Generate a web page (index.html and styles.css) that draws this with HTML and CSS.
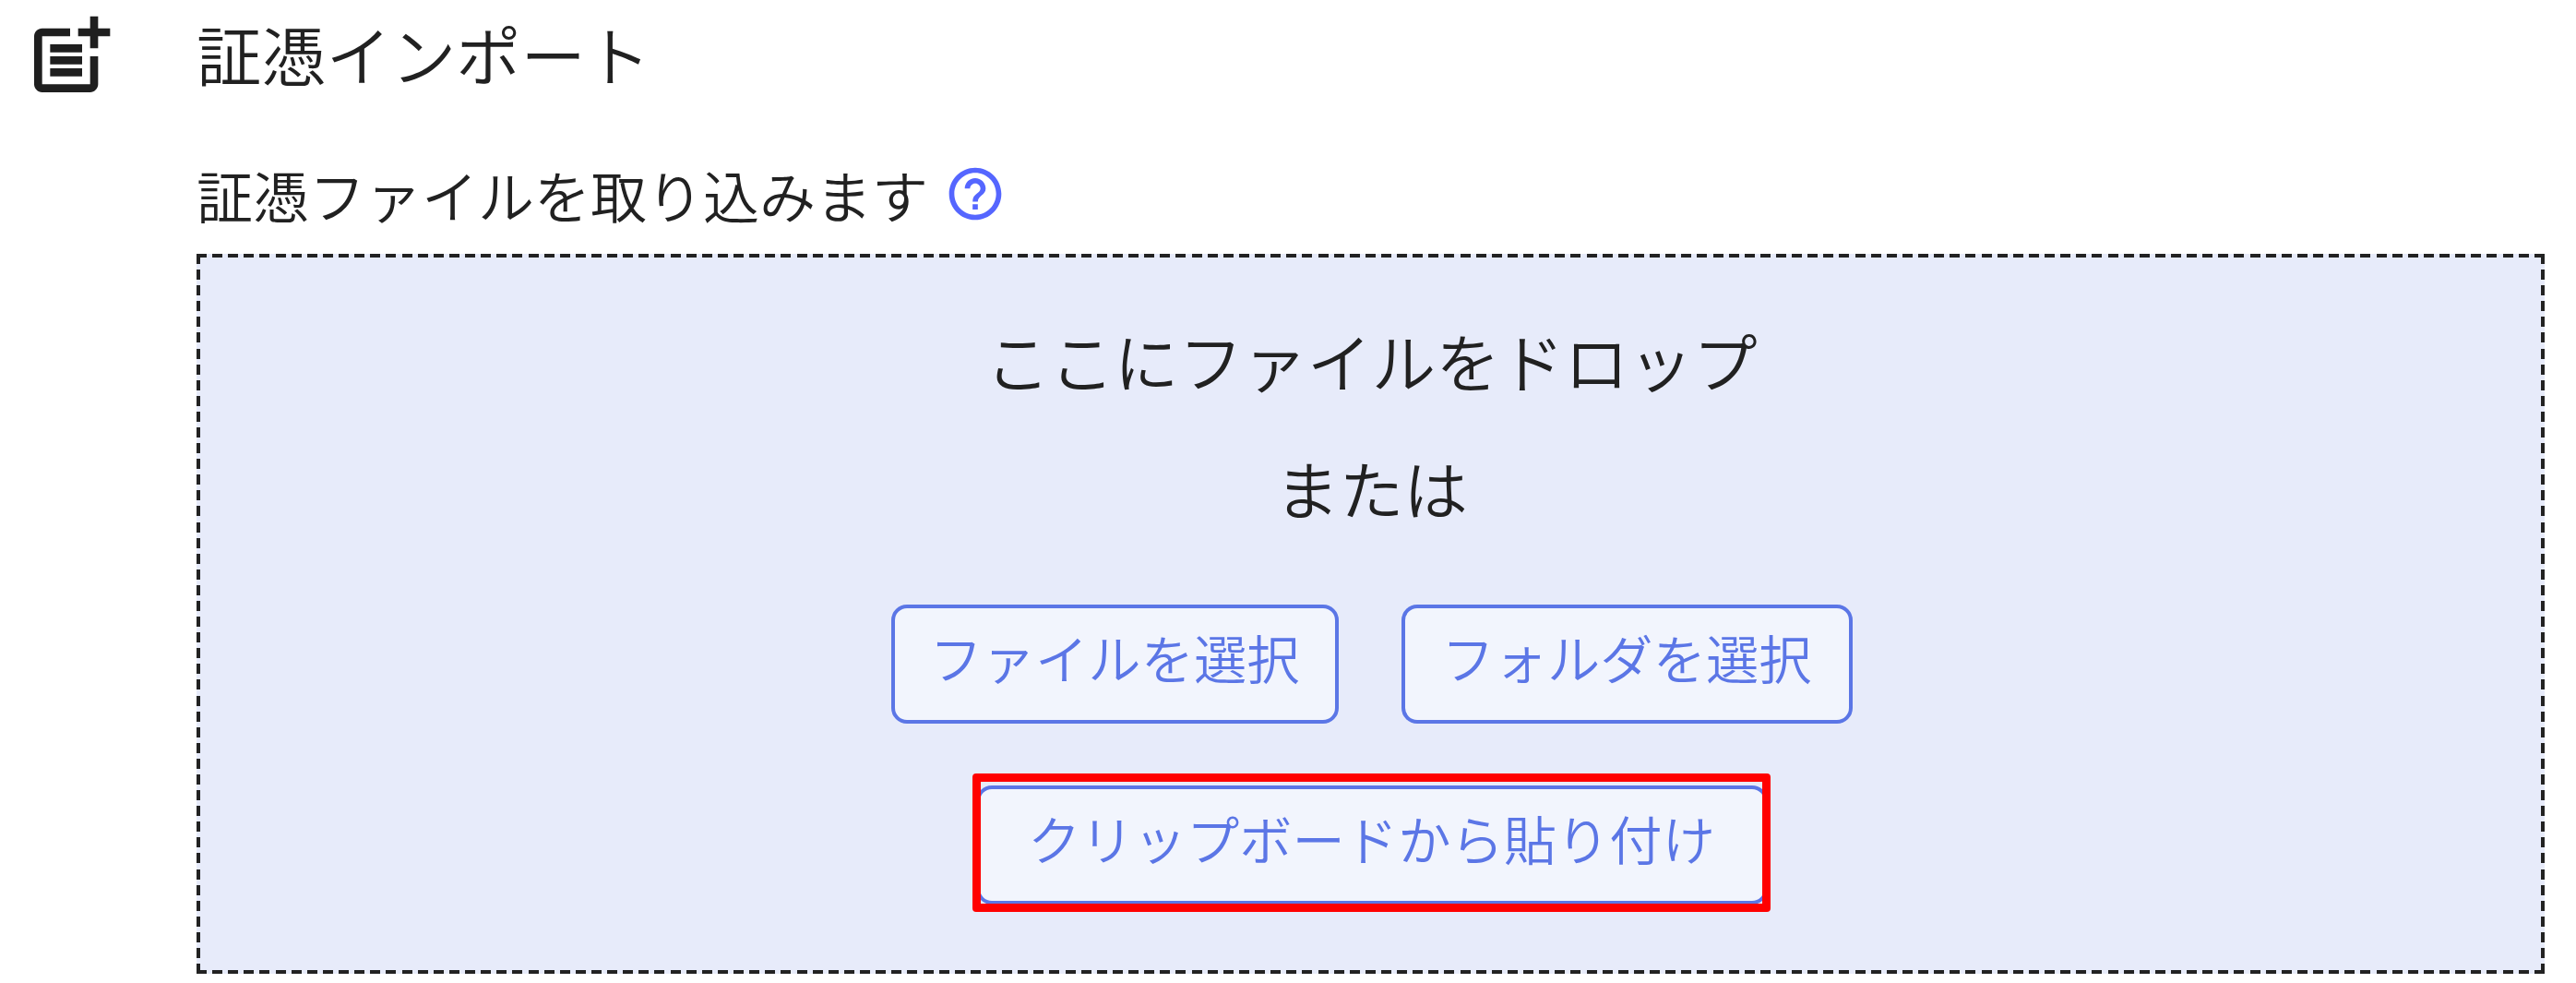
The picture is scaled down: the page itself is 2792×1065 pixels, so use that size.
FILE: index.html
```html
<!DOCTYPE html>
<html lang="ja">
  <head>
    <meta charset="UTF-8" />
    <meta name="viewport" content="width=device-width, initial-scale=1.0" />
    <title>証憑インポート</title>
    <link rel="stylesheet" href="styles.css">
  </head>
  <body>
    <div class="import-section">
      <svg class="section-icon" viewBox="0 0 24 24" preserveAspectRatio="none">
        <path d="M17 19H5V7h7V5H5c-1.1 0-2 .9-2 2v12c0 1.1.9 2 2 2h12c1.1 0 2-.9 2-2v-7h-2z" />
        <path d="M19 2h-2v3h-3v2h3v3h2V7h3V5h-3zM7 9h8v2H7zM7 12h8v2H7zM7 15h8v2H7z" />
      </svg>
      <div class="import-body">
        <h1 class="title">証憑インポート</h1>
        <div class="description">
          <span>証憑ファイルを取り込みます</span>
          <svg class="help-icon" viewBox="0 0 24 24">
            <path d="M11 18h2v-2h-2v2zm1-16C6.48 2 2 6.48 2 12s4.48 10 10 10 10-4.480 10-10S17.520 2 12 2zm0 18c-4.410 0-8-3.590-8-8s3.590-8 8-8 8 3.590 8 8-3.590 8-8 8zm0-14c-2.210 0-4 1.790-4 4h2c0-1.100.9-2 2-2s2 .9 2 2c0 2-3 1.750-3 5h2c0-2.250 3-2.500 3-5 0-2.210-1.790-4-4-4z" />
          </svg>
        </div>
        <div class="drop-area">
          <p class="drop-text">ここにファイルをドロップ</p>
          <p class="drop-text">または</p>
          <div class="button-row">
            <button class="select-button">ファイルを選択</button>
            <button class="select-button folder-button">フォルダを選択</button>
          </div>
          <div class="highlight">
            <button class="select-button paste-button">クリップボードから貼り付け</button>
          </div>
        </div>
      </div>
    </div>
  </body>
</html>
```
FILE: styles.css
```css
body {
  margin: 0;
  background-color: #fff;
  color: #212121;
  font-family: "Noto Sans CJK JP", sans-serif;
  font-weight: 350;
}
.import-section {
  display: flex;
  align-items: flex-start;
  width: 2758px;
  height: 1065px;
  overflow: hidden;
}
.section-icon {
  flex: none;
  width: 104px;
  height: 104px;
  margin: 9px 85px 0 24px;
  fill: #1f1f1f;
}
.import-body {
  flex: 1;
}
.title {
  margin: 7px 0 0;
  font-size: 70.3px;
  font-weight: inherit;
  line-height: 100px;
}
.description {
  display: flex;
  align-items: center;
  height: 100px;
  margin-top: 54px;
  font-size: 61px;
  line-height: 100px;
}
.help-icon {
  width: 68px;
  height: 68px;
  margin: -2px 0 0 17px;
  fill: #5566ff;
}
.drop-area {
  --dash: #222 0 11px, transparent 11px;
  box-sizing: border-box;
  display: flex;
  flex-direction: column;
  align-items: center;
  height: 780px;
  margin-top: 14px;
  padding: 65px 0 0 2px;
  background-color: #e7ebfa;
  /* 破線の枠 (上・下・左・右) */
  background-image:
    repeating-linear-gradient(to right, var(--dash) 17.12px),
    repeating-linear-gradient(to right, var(--dash) 17.12px),
    repeating-linear-gradient(to bottom, var(--dash) 17.09px),
    repeating-linear-gradient(to bottom, var(--dash) 17.09px);
  background-position: top, bottom, left, right;
  background-size: 100% 4px, 100% 4px, 4px 100%, 4px 100%;
  background-repeat: no-repeat;
}
.drop-text {
  margin: 0 0 38px;
  font-size: 69.7px;
  line-height: 100px;
}
.button-row {
  display: flex;
  gap: 68px;
  margin: 39px 0 54px;
}
.select-button {
  box-sizing: border-box;
  width: 485px;
  height: 129px;
  padding: 0 0 16px;
  border: 4px solid #5b76e6;
  border-radius: 17px;
  background-color: #f2f5fd;
  color: #5b76e6;
  font-family: inherit;
  font-size: 57.3px;
  font-weight: inherit;
  line-height: 1;
  white-space: nowrap;
}
.folder-button {
  width: 489px;
}
.highlight {
  box-sizing: border-box;
  display: flex;
  justify-content: center;
  width: 865px;
  height: 150px;
  padding-top: 4px;
  border: 9px solid #f00;
  border-radius: 4px;
  overflow: hidden;
}
.paste-button {
  flex: none;
  width: 858px;
}
```
